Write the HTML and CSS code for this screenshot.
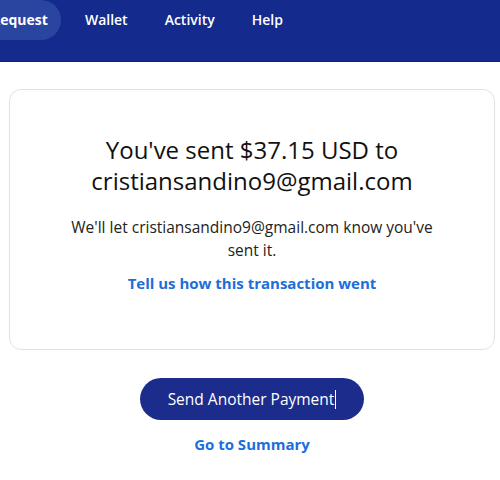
FILE: index.html
```html
<!DOCTYPE html>
<html lang="en">
<head>
    <meta charset="UTF-8">
    <meta name="viewport" content="width=device-width, initial-scale=1.0">
    <title>Payment sent</title>
    <link rel="stylesheet" href="styles.css">
</head>
<body>
    <header class="topbar">
        <nav class="nav">
            <a class="nav-item active" href="#">Request</a>
            <a class="nav-item" href="#">Wallet</a>
            <a class="nav-item" href="#">Activity</a>
            <a class="nav-item" href="#">Help</a>
        </nav>
    </header>

    <main class="content">
        <section class="card">
            <h1 class="title">You've sent $37.15 USD to cristiansandino9@gmail.com</h1>
            <p class="note">We'll let cristiansandino9@gmail.com know you've sent it.</p>
            <a class="link" href="#">Tell us how this transaction went</a>
        </section>

        <div class="actions">
            <button class="btn-primary" type="button">Send Another Payment<span class="caret"></span></button>
            <a class="link" href="#">Go to Summary</a>
        </div>
    </main>
</body>
</html>
```

FILE: styles.css
```css
body {
    margin: 0;
    padding: 0;
    background-color: #fff;
    font-family: "Open Sans", Arial, sans-serif;
    color: #111;
}

.topbar {
    height: 61px;
    background-color: #142a8c;
    border-bottom: 1px solid #0f2173;
}

.nav {
    display: flex;
    gap: 11px;
    margin-left: -22px;
}

.nav-item {
    display: block;
    height: 40px;
    line-height: 40px;
    padding: 0 13px;
    border-radius: 20px;
    color: #fff;
    font-size: 14px;
    font-weight: 600;
    text-decoration: none;
}

.nav-item.active {
    background-color: #2a45a0;
    font-weight: 700;
    border-radius: 0 20px 20px 0;
}

.content {
    padding: 27px 5px 0 9px;
}

.card {
    border: 1px solid #e2e2e2;
    border-radius: 12px;
    padding: 44px 40px 55px;
    text-align: center;
}

.title {
    margin: 0 auto 20px;
    max-width: 340px;
    font-size: 24px;
    font-weight: 400;
    line-height: 31px;
    color: #111;
}

.note {
    margin: 0 auto 10px;
    max-width: 380px;
    font-size: 15.5px;
    line-height: 23px;
    color: #222;
}

.link {
    display: inline-block;
    color: #1d6ed8;
    font-size: 15px;
    font-weight: 700;
    text-decoration: none;
}

.actions {
    display: flex;
    flex-direction: column;
    align-items: center;
    gap: 14px;
    padding-top: 28px;
}

.btn-primary {
    width: 224px;
    height: 42px;
    border: none;
    border-radius: 21px;
    background-color: #1b2c8c;
    color: #fff;
    font-family: "Open Sans", Arial, sans-serif;
    font-size: 15.5px;
    font-weight: 500;
    cursor: pointer;
}

.caret {
    display: inline-block;
    width: 1px;
    height: 19px;
    margin-left: 1px;
    vertical-align: -4px;
    background-color: #fff;
}
```
